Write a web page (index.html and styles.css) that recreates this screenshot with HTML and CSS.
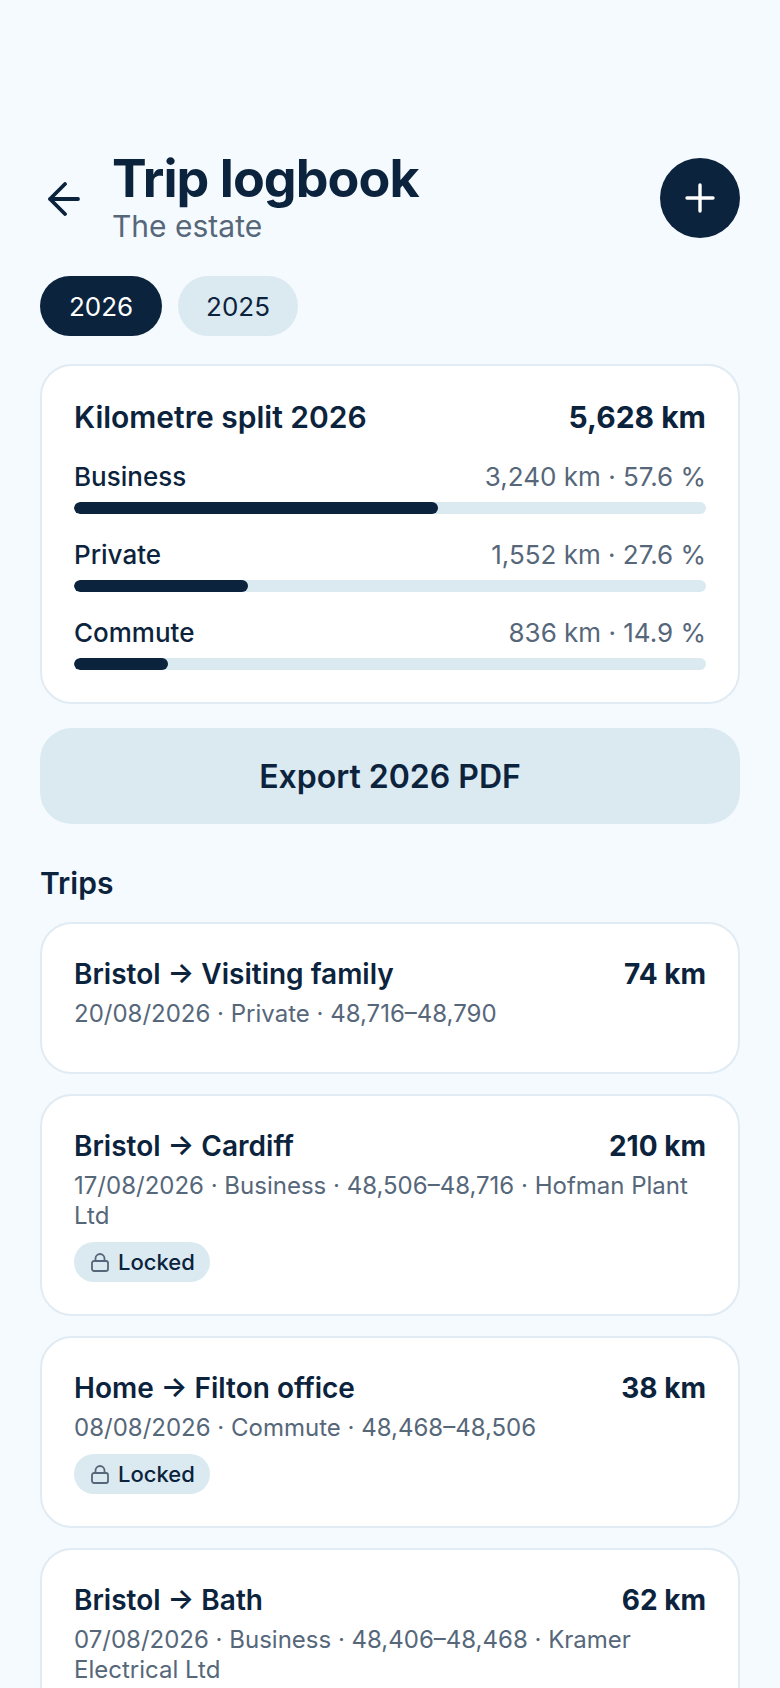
FILE: index.html
```html
<!DOCTYPE html>
<html lang="en">
<head>
<meta charset="utf-8">
<title>Trip logbook</title>
<link rel="stylesheet" href="styles.css">
</head>
<body>
<main class="page">
  <header class="header">
    <button class="back" aria-label="Back">
      <svg width="32" height="34" viewBox="0 0 32 34" fill="none" stroke="#0b233c" stroke-width="3.8" stroke-linecap="round" stroke-linejoin="round"><path d="M30 17H2M17 2 2 17l15 15"/></svg>
    </button>
    <div class="titles">
      <h1 class="title">Trip logbook</h1>
      <p class="subtitle">The estate</p>
    </div>
    <button class="add" aria-label="Add">
      <svg width="30" height="30" viewBox="0 0 30 30" fill="none" stroke="#fff" stroke-width="3.4" stroke-linecap="round"><path d="M15 2v26M2 15h26"/></svg>
    </button>
  </header>

  <div class="pills">
    <span class="pill pill-active">2026</span>
    <span class="pill">2025</span>
  </div>

  <section class="card split">
    <div class="split-head">
      <span class="split-title">Kilometre split 2026</span>
      <strong class="split-total">5,628 km</strong>
    </div>
    <div class="metric">
      <div class="metric-row"><span class="metric-name">Business</span><span class="metric-value">3,240 km · 57.6 %</span></div>
      <div class="track"><div class="fill" style="width:57.6%"></div></div>
    </div>
    <div class="metric">
      <div class="metric-row"><span class="metric-name">Private</span><span class="metric-value">1,552 km · 27.6 %</span></div>
      <div class="track"><div class="fill" style="width:27.6%"></div></div>
    </div>
    <div class="metric">
      <div class="metric-row"><span class="metric-name">Commute</span><span class="metric-value">836 km · 14.9 %</span></div>
      <div class="track"><div class="fill" style="width:14.9%"></div></div>
    </div>
  </section>

  <button class="export">Export 2026 PDF</button>

  <h2 class="section-title">Trips</h2>

  <section class="trips">
    <article class="card trip trip-open">
      <div class="trip-head"><span class="route">Bristol → Visiting family</span><span class="km">74 km</span></div>
      <p class="meta">20/08/2026 · Private · 48,716–48,790</p>
    </article>
    <article class="card trip">
      <div class="trip-head"><span class="route">Bristol → Cardiff</span><span class="km">210 km</span></div>
      <p class="meta">17/08/2026 · Business · 48,506–48,716 · Hofman Plant Ltd</p>
      <span class="badge"><svg width="18" height="19" viewBox="0 0 18 19" fill="none" stroke="#56677a" stroke-width="1.8" stroke-linejoin="round"><rect x="1" y="8" width="16" height="10" rx="2"/><path d="M4.5 8V5.5a4.5 4.5 0 0 1 9 0V8"/></svg>Locked</span>
    </article>
    <article class="card trip">
      <div class="trip-head"><span class="route">Home → Filton office</span><span class="km">38 km</span></div>
      <p class="meta">08/08/2026 · Commute · 48,468–48,506</p>
      <span class="badge"><svg width="18" height="19" viewBox="0 0 18 19" fill="none" stroke="#56677a" stroke-width="1.8" stroke-linejoin="round"><rect x="1" y="8" width="16" height="10" rx="2"/><path d="M4.5 8V5.5a4.5 4.5 0 0 1 9 0V8"/></svg>Locked</span>
    </article>
    <article class="card trip">
      <div class="trip-head"><span class="route">Bristol → Bath</span><span class="km">62 km</span></div>
      <p class="meta">07/08/2026 · Business · 48,406–48,468 · Kramer Electrical Ltd</p>
    </article>
  </section>
</main>
</body>
</html>
```

FILE: styles.css
```css
* { box-sizing: border-box; }
html, body { margin: 0; padding: 0; height: 100%; overflow: hidden; }
body { background: #f5fafe; color: #0b233c; font-family: Inter, "Noto Sans", sans-serif; }
button { font: inherit; border: 0; padding: 0; cursor: pointer; }
h1, h2, p { margin: 0; }

.page { height: 1688px; overflow: hidden; padding: 150px 40px 0; }

.header { display: flex; align-items: center; height: 96px; }
.back { width: 72px; height: 80px; padding-left: 8px; display: flex; align-items: center; background: none; margin-top: 2px; }
.titles { flex: 1; min-width: 0; margin-top: -2px; }
.title { font-size: 52px; line-height: 58px; font-weight: 700; letter-spacing: -0.95px; }
.subtitle { font-size: 30px; line-height: 36px; color: #56677a; }
.add { width: 80px; height: 80px; border-radius: 50%; background: #0b233c; display: flex; align-items: center; justify-content: center; }

.pills { display: flex; gap: 16px; margin-top: 30px; }
.pill { height: 60px; width: 120px; border-radius: 30px; background: #dbe9f1; font-size: 26px; display: flex; align-items: center; justify-content: center; }
.pill-active { width: 122px; background: #0b233c; color: #fff; }

.card { background: #fff; border: 2px solid #e0ebf3; border-radius: 32px; }

.split { margin-top: 28px; height: 340px; padding: 31px 32px 0; }
.split-head { display: flex; justify-content: space-between; align-items: center; height: 40px; font-size: 30px; font-weight: 600; }
.split-total { font-weight: 700; }
.metric { margin-top: 21px; }
.metric + .metric { margin-top: 22px; }
.metric-row { display: flex; justify-content: space-between; align-items: center; height: 36px; font-size: 26px; }
.metric-name { font-weight: 500; }
.metric-value { color: #56677a; }
.track { height: 12px; border-radius: 6px; background: #dbe9f1; margin-top: 8px; overflow: hidden; }
.fill { height: 100%; background: #0b233c; border-radius: 6px; }

.export { display: block; margin-top: 24px; height: 96px; width: 100%; border-radius: 32px; background: #dbe9f1; color: #0b233c; font-size: 32px; font-weight: 600; }

.section-title { margin-top: 39px; font-size: 30px; line-height: 40px; font-weight: 600; }

.trips { margin-top: 19px; display: flex; flex-direction: column; gap: 20px; }
.trip { padding: 32px; flex: none; }
.trip-open { height: 152px; }
.trip-head { display: flex; justify-content: space-between; align-items: center; height: 36px; font-size: 28px; font-weight: 600; }
.km { font-weight: 700; }
.meta { margin-top: 7px; font-size: 24px; line-height: 30px; color: #56677a; }
.badge { margin-top: 11px; height: 40px; width: 136px; display: flex; align-items: center; gap: 9px; padding-left: 17px; border-radius: 20px; background: #dbe9f1; font-size: 22px; font-weight: 500; }
```
